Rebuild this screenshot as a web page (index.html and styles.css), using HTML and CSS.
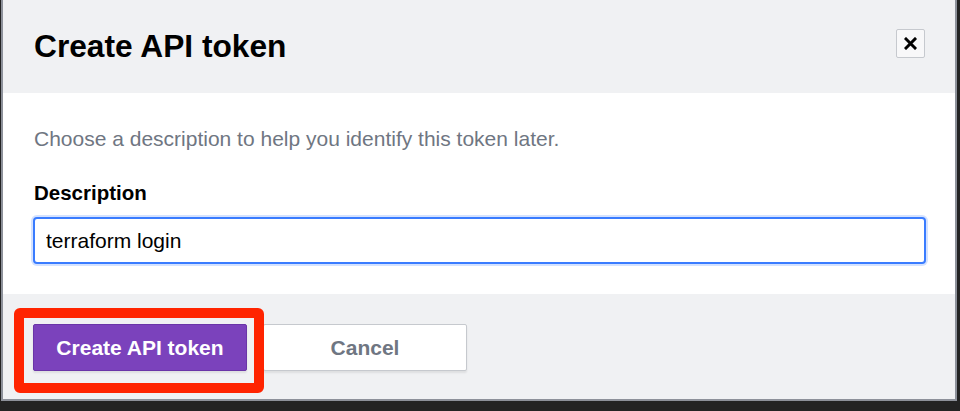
FILE: index.html
```html
<!DOCTYPE html>
<html lang="en">
<head>
    <meta charset="UTF-8">
    <title>Create API token</title>
    <link rel="stylesheet" href="styles.css">
</head>
<body>
    <div class="modal">
        <div class="modal-header">
            <h2>Create API token</h2>
            <button class="close-btn" type="button" aria-label="Close">
                <svg width="13" height="13" viewBox="0 0 13 13">
                    <path d="M2 2 L11 11 M11 2 L2 11" stroke="#000" stroke-width="3" stroke-linecap="square"/>
                </svg>
            </button>
        </div>
        <div class="modal-body">
            <p class="hint">Choose a description to help you identify this token later.</p>
            <label class="field-label" for="tokenDesc">Description</label>
            <input type="text" id="tokenDesc" class="field-input" value="terraform login">
        </div>
        <div class="modal-footer">
            <button type="button" class="btn btn-primary">Create API token</button>
            <button type="button" class="btn btn-secondary">Cancel</button>
            <div class="highlight"></div>
        </div>
    </div>
</body>
</html>
```

FILE: styles.css
```css
body {
    margin: 0;
    background: #232323;
    font-family: 'Liberation Sans', Arial, sans-serif;
    height: 411px;
    overflow: hidden;
}

.modal {
    margin-left: 1px;
    width: 952px;
    border: 2px solid #8d919a;
    border-top: none;
    background: #fff;
}

.modal-header {
    height: 93px;
    background: #f0f1f3;
    display: flex;
    align-items: center;
    justify-content: space-between;
    padding: 0 30px 0 31px;
    box-sizing: border-box;
}

.modal-header h2 {
    margin: 0;
    font-size: 31.7px;
    font-weight: bold;
    color: #000;
}

.close-btn {
    width: 29px;
    height: 29px;
    padding: 0;
    border: 1px solid #c6c9ce;
    border-radius: 2px;
    background: #f8f8f9;
    display: flex;
    align-items: center;
    justify-content: center;
    margin-bottom: 6px;
}

.modal-body {
    height: 201px;
    box-sizing: border-box;
    padding: 33px 29px 0 30px;
}

.hint {
    margin: 0 0 0 1px;
    font-size: 21px;
    line-height: 26px;
    color: #6f7682;
}

.field-label {
    display: block;
    margin: 29px 0 0 1px;
    font-size: 20.5px;
    line-height: 24px;
    font-weight: bold;
    color: #000;
}

.field-input {
    display: block;
    box-sizing: border-box;
    width: 893px;
    height: 47px;
    margin-top: 12px;
    padding: 0 11px;
    border: 2px solid #3a7cff;
    border-radius: 4px;
    box-shadow: 0 0 0 2px rgba(58, 124, 255, 0.22);
    font-family: inherit;
    font-size: 21px;
    color: #000;
    outline: none;
}

.modal-footer {
    position: relative;
    height: 105px;
    box-sizing: border-box;
    background: #f0f1f3;
    padding: 30px 30px 0 30px;
    display: flex;
    align-items: flex-start;
    gap: 16px;
}

.btn {
    height: 47px;
    font-family: inherit;
    font-size: 21px;
    font-weight: bold;
    border-radius: 2px;
    box-shadow: 0 2px 2px rgba(0, 0, 0, 0.08);
    cursor: pointer;
}

.btn-primary {
    width: 214px;
    background: #7b42bc;
    border: 1px solid #6a35a8;
    color: #fff;
}

.btn-secondary {
    width: 204px;
    background: #fff;
    border: 1px solid #c6c9ce;
    color: #6f7682;
}

.highlight {
    position: absolute;
    left: 11px;
    top: 14px;
    width: 250px;
    height: 85px;
    box-sizing: border-box;
    border: 10px solid #ff2400;
    border-radius: 6px;
}
```
